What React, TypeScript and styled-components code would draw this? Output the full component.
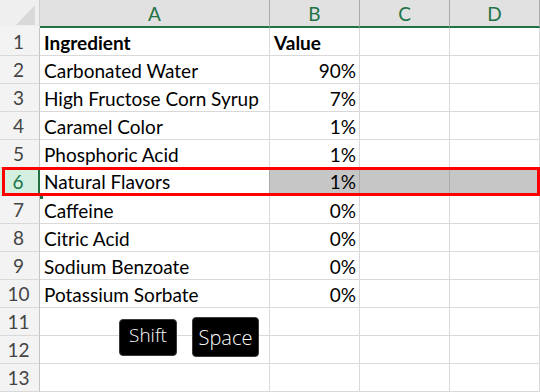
import React from "react";
import styled, { createGlobalStyle } from "styled-components";

type Row = {
    ingredient: string;
    value: string;
    bold?: boolean;
};

const rows: Array<Row> = [
    { ingredient: "Ingredient", value: "Value", bold: true },
    { ingredient: "Carbonated Water", value: "90%" },
    { ingredient: "High Fructose Corn Syrup", value: "7%" },
    { ingredient: "Caramel Color", value: "1%" },
    { ingredient: "Phosphoric Acid", value: "1%" },
    { ingredient: "Natural Flavors", value: "1%" },
    { ingredient: "Caffeine", value: "0%" },
    { ingredient: "Citric Acid", value: "0%" },
    { ingredient: "Sodium Benzoate", value: "0%" },
    { ingredient: "Potassium Sorbate", value: "0%" },
    { ingredient: "", value: "" },
    { ingredient: "", value: "" },
    { ingredient: "", value: "" },
];

const SELECTED_ROW = 6;
const columns = ["A", "B", "C", "D"];

const GlobalStyle = createGlobalStyle`
    html, body {
        margin: 0;
        padding: 0;
        background: #ffffff;
    }
    body {
        font-family: Lato, "Liberation Sans", sans-serif;
    }
`;

const App = () => {
    return (
        <>
            <GlobalStyle />
            <Sheet>
                <Grid>
                    <Corner>
                        <svg width="39" height="26" viewBox="0 0 39 26">
                            <polygon points="35,5 35,25 16,25" fill="#d9d9d9" />
                        </svg>
                    </Corner>
                    {columns.map((col) => (
                        <ColHeader key={col}>{col}</ColHeader>
                    ))}

                    {rows.map((row, index) => {
                        const n = index + 1;
                        const selected = n === SELECTED_ROW;
                        return (
                            <React.Fragment key={n}>
                                <RowHeader selected={selected}>{n}</RowHeader>
                                <Cell bold={row.bold} selected={selected} active={selected}>
                                    {row.ingredient}
                                </Cell>
                                <Cell
                                    bold={row.bold}
                                    selected={selected}
                                    align={row.bold ? "left" : "right"}
                                >
                                    {row.value}
                                </Cell>
                                <Cell selected={selected} />
                                <Cell selected={selected} />
                            </React.Fragment>
                        );
                    })}
                </Grid>

                <FillHandle />
                <Highlight />

                <Keys>
                    <Key>Shift</Key>
                    <Key wide>Space</Key>
                </Keys>
            </Sheet>
        </>
    );
};

export default App;

const Sheet = styled.div`
    position: relative;
    width: 540px;
    height: 392px;
    overflow: hidden;
    background: #ffffff;
`;

const Grid = styled.div`
    display: grid;
    grid-template-columns: 40px 230px 90px 90px 90px;
    grid-template-rows: 28px;
    grid-auto-rows: 28px;
`;

const Corner = styled.div`
    box-sizing: border-box;
    background: #efefef;
    border-right: 1px solid #cfcfcf;
    border-bottom: 2px solid #f3f3f3;
    display: flex;
    align-items: flex-start;
`;

const ColHeader = styled.div`
    box-sizing: border-box;
    background: #e1e1e1;
    border-right: 1px solid #ababab;
    border-bottom: 2px solid #217346;
    color: #217346;
    font-family: Lato, "Liberation Sans", sans-serif;
    font-size: 19px;
    display: flex;
    align-items: center;
    justify-content: center;
    padding-top: 1px;
`;

interface RowHeaderProps {
    selected?: boolean;
}

const RowHeader = styled.div<RowHeaderProps>`
    box-sizing: border-box;
    background: ${(p) => (p.selected ? "#d3f0e0" : "#f3f3f3")};
    border-right: ${(p) => (p.selected ? "2px solid #217346" : "1px solid #c4c4c4")};
    border-bottom: 1px solid #d9d9d9;
    color: ${(p) => (p.selected ? "#217346" : "#444444")};
    font-family: Lato, "Liberation Sans", sans-serif;
    font-size: 19px;
    display: flex;
    align-items: center;
    justify-content: center;
    padding-right: 2px;
`;

interface CellProps {
    bold?: boolean;
    selected?: boolean;
    active?: boolean;
    align?: "left" | "right";
}

const Cell = styled.div<CellProps>`
    box-sizing: border-box;
    background: ${(p) => (p.selected && !p.active ? "#c6c6c6" : "#ffffff")};
    border-right: 1px solid ${(p) => (p.selected ? "#ababab" : "#d9d9d9")};
    border-bottom: ${(p) => (p.selected ? "2px solid #217346" : "1px solid #d9d9d9")};
    color: #000000;
    font-family: Lato, "Liberation Sans", sans-serif;
    font-size: 19px;
    font-weight: ${(p) => (p.bold ? 700 : 400)};
    white-space: nowrap;
    display: flex;
    align-items: center;
    justify-content: ${(p) => (p.align === "right" ? "flex-end" : "flex-start")};
    padding: 1px 3px 0 4px;
`;

const FillHandle = styled.div`
    position: absolute;
    left: 40px;
    top: 196px;
    width: 3px;
    height: 3px;
    background: #217346;
`;

const Highlight = styled.div`
    position: absolute;
    left: 2px;
    top: 167px;
    width: 538px;
    height: 29px;
    box-sizing: border-box;
    border: 3px solid #ff0000;
    pointer-events: none;
`;

const Keys = styled.div`
    position: absolute;
    left: 119px;
    top: 317px;
    display: flex;
    align-items: center;
    gap: 15px;
`;

interface KeyProps {
    wide?: boolean;
}

const Key = styled.div<KeyProps>`
    box-sizing: border-box;
    height: ${(p) => (p.wide ? "40px" : "37px")};
    width: ${(p) => (p.wide ? "67px" : "58px")};
    background: #000000;
    border: 1px solid #3a3a3a;
    border-radius: 4px;
    color: #ffffff;
    font-family: "Open Sans", "Liberation Sans", sans-serif;
    font-weight: 300;
    font-size: ${(p) => (p.wide ? "20px" : "19px")};
    display: flex;
    align-items: center;
    justify-content: center;
    padding-bottom: ${(p) => (p.wide ? "0" : "4px")};
`;
